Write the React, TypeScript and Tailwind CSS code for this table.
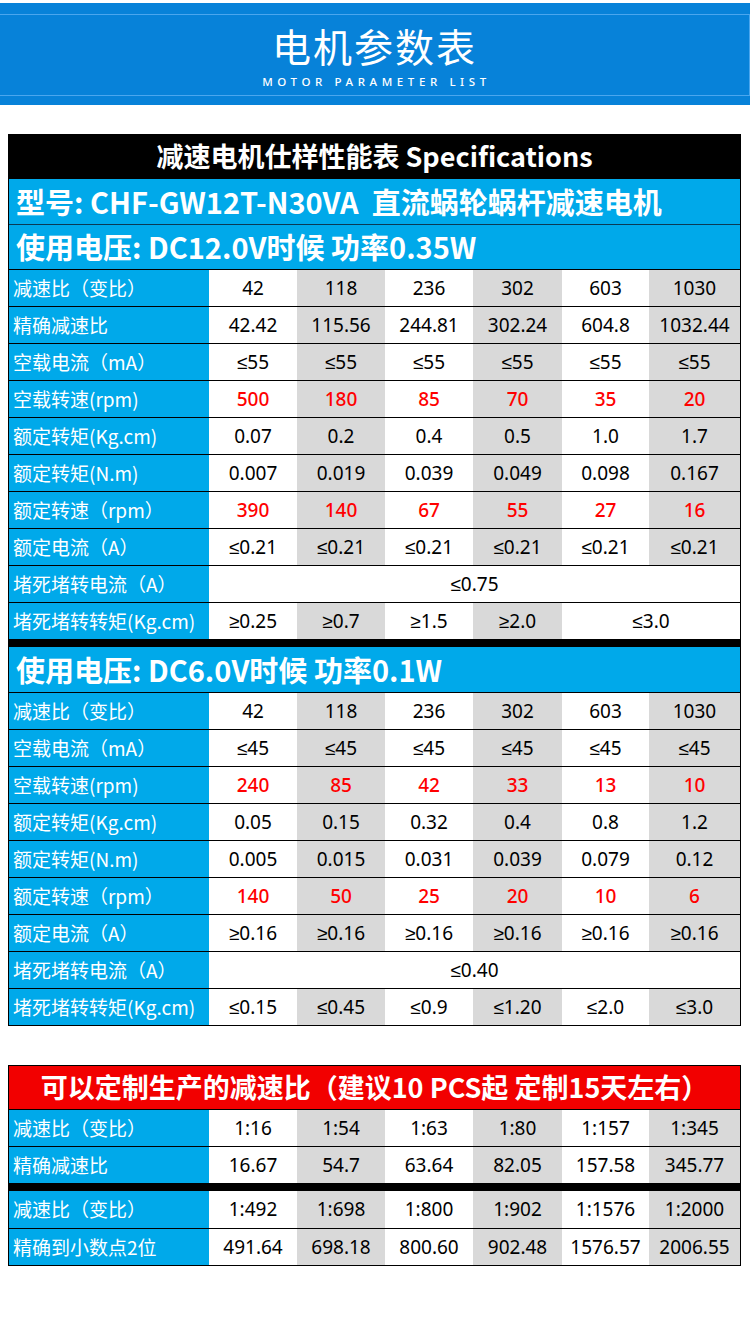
import React from 'react';

type Val = string | { v: string; span: 2 | 6 };
type Row = { label: string; vals: Val[]; red?: boolean };

const GRID = 'grid grid-cols-[200px_88px_88px_88px_89px_87px_91px]';
const CJK = "font-['Noto_Sans_CJK_SC','Noto_Sans',sans-serif]";
const NUM = "font-['Noto_Sans','Liberation_Sans','Noto_Sans_CJK_SC',sans-serif]";

const spec12: Row[] = [
  { label: '减速比（变比）', vals: ['42', '118', '236', '302', '603', '1030'] },
  { label: '精确减速比', vals: ['42.42', '115.56', '244.81', '302.24', '604.8', '1032.44'] },
  { label: '空载电流（mA）', vals: ['≤55', '≤55', '≤55', '≤55', '≤55', '≤55'] },
  { label: '空载转速(rpm)', vals: ['500', '180', '85', '70', '35', '20'], red: true },
  { label: '额定转矩(Kg.cm)', vals: ['0.07', '0.2', '0.4', '0.5', '1.0', '1.7'] },
  { label: '额定转矩(N.m)', vals: ['0.007', '0.019', '0.039', '0.049', '0.098', '0.167'] },
  { label: '额定转速（rpm）', vals: ['390', '140', '67', '55', '27', '16'], red: true },
  { label: '额定电流（A）', vals: ['≤0.21', '≤0.21', '≤0.21', '≤0.21', '≤0.21', '≤0.21'] },
  { label: '堵死堵转电流（A）', vals: [{ v: '≤0.75', span: 6 }] },
  { label: '堵死堵转转矩(Kg.cm)', vals: ['≥0.25', '≥0.7', '≥1.5', '≥2.0', { v: '≤3.0', span: 2 }] },
];

const spec6: Row[] = [
  { label: '减速比（变比）', vals: ['42', '118', '236', '302', '603', '1030'] },
  { label: '空载电流（mA）', vals: ['≤45', '≤45', '≤45', '≤45', '≤45', '≤45'] },
  { label: '空载转速(rpm)', vals: ['240', '85', '42', '33', '13', '10'], red: true },
  { label: '额定转矩(Kg.cm)', vals: ['0.05', '0.15', '0.32', '0.4', '0.8', '1.2'] },
  { label: '额定转矩(N.m)', vals: ['0.005', '0.015', '0.031', '0.039', '0.079', '0.12'] },
  { label: '额定转速（rpm）', vals: ['140', '50', '25', '20', '10', '6'], red: true },
  { label: '额定电流（A）', vals: ['≥0.16', '≥0.16', '≥0.16', '≥0.16', '≥0.16', '≥0.16'] },
  { label: '堵死堵转电流（A）', vals: [{ v: '≤0.40', span: 6 }] },
  { label: '堵死堵转转矩(Kg.cm)', vals: ['≤0.15', '≤0.45', '≤0.9', '≤1.20', '≤2.0', '≤3.0'] },
];

const custom1: Row[] = [
  { label: '减速比（变比）', vals: ['1:16', '1:54', '1:63', '1:80', '1:157', '1:345'] },
  { label: '精确减速比', vals: ['16.67', '54.7', '63.64', '82.05', '157.58', '345.77'] },
];

const custom2: Row[] = [
  { label: '减速比（变比）', vals: ['1:492', '1:698', '1:800', '1:902', '1:1576', '1:2000'] },
  { label: '精确到小数点2位', vals: ['491.64', '698.18', '800.60', '902.48', '1576.57', '2006.55'] },
];

const DataRow: React.FC<{ row: Row; first?: boolean }> = ({ row, first }) => (
  <div className={`${GRID} h-[37px] ${first ? '' : 'border-t border-black'}`}>
    <div className={`${CJK} bg-[#00a9ea] text-white text-[19px] pl-[4px] flex items-center whitespace-nowrap`}>
      {row.label}
    </div>
    {row.vals.map((val, i) => {
      const span = typeof val === 'string' ? 0 : val.span;
      const text = typeof val === 'string' ? val : val.v;
      const bg = span ? 'bg-white' : i % 2 === 0 ? 'bg-white' : 'bg-[#d9d9d9]';
      const spanCls = span === 6 ? 'col-span-6' : span === 2 ? 'col-span-2' : '';
      return (
        <div
          key={i}
          className={`${NUM} ${bg} ${spanCls} flex items-center justify-center text-[19px] ${
            row.red ? 'text-[#ff0000] font-medium' : 'text-black'
          }`}
        >
          {text}
        </div>
      );
    })}
  </div>
);

const VoltRow: React.FC<{ text: string; border?: boolean }> = ({ text, border }) => (
  <div
    className={`${CJK} h-[45px] bg-[#00a9ea] text-white font-bold text-[29px] pl-[7px] flex items-center whitespace-pre ${
      border ? 'border-t border-[#0b3a55]' : ''
    }`}
  >
    {text}
  </div>
);

export default function App() {
  return (
    <div className="w-[750px] min-h-[1338px] bg-white">
      {/* 顶部标题 */}
      <div className="mt-[3px] bg-[#0782d9] pt-[11px] pb-[9px]">
        <div className="h-[82px] border-y border-r border-[#4aa6ee] flex flex-col items-center pt-[10px]">
          <div className={`${CJK} text-white text-[39px] leading-[40px] font-normal tracking-[2px]`}>电机参数表</div>
          <div className="font-['Noto_Sans',sans-serif] text-white text-[11.5px] leading-[12px] font-medium tracking-[4.6px] mt-[11px] pl-[4px]">
            MOTOR PARAMETER LIST
          </div>
        </div>
      </div>

      {/* 规格表 */}
      <div className="mt-[29px] ml-[8px] w-[733px] border-x border-b border-black">
        <div className={`${CJK} h-[45px] bg-black text-white font-bold text-[27px] flex items-center justify-center whitespace-nowrap`}>
          减速电机仕样性能表 Specifications
        </div>
        <VoltRow text="型号: CHF-GW12T-N30VA  直流蜗轮蜗杆减速电机" />
        <VoltRow text="使用电压: DC12.0V时候 功率0.35W" border />
        {spec12.map((r, i) => (
          <DataRow key={i} row={r} />
        ))}
        <div className="h-[8px] bg-black" />
        <VoltRow text="使用电压: DC6.0V时候 功率0.1W" />
        {spec6.map((r, i) => (
          <DataRow key={i} row={r} />
        ))}
      </div>

      {/* 定制减速比 */}
      <div className="mt-[39px] ml-[8px] w-[733px] border border-black">
        <div className={`${CJK} h-[43px] bg-[#f20000] text-white font-bold text-[27px] flex items-center justify-center whitespace-nowrap`}>
          可以定制生产的减速比（建议10 PCS起 定制15天左右）
        </div>
        {custom1.map((r, i) => (
          <DataRow key={i} row={r} />
        ))}
        <div className="h-[8px] bg-black" />
        {custom2.map((r, i) => (
          <DataRow key={i} row={r} first={i === 0} />
        ))}
      </div>
    </div>
  );
}
